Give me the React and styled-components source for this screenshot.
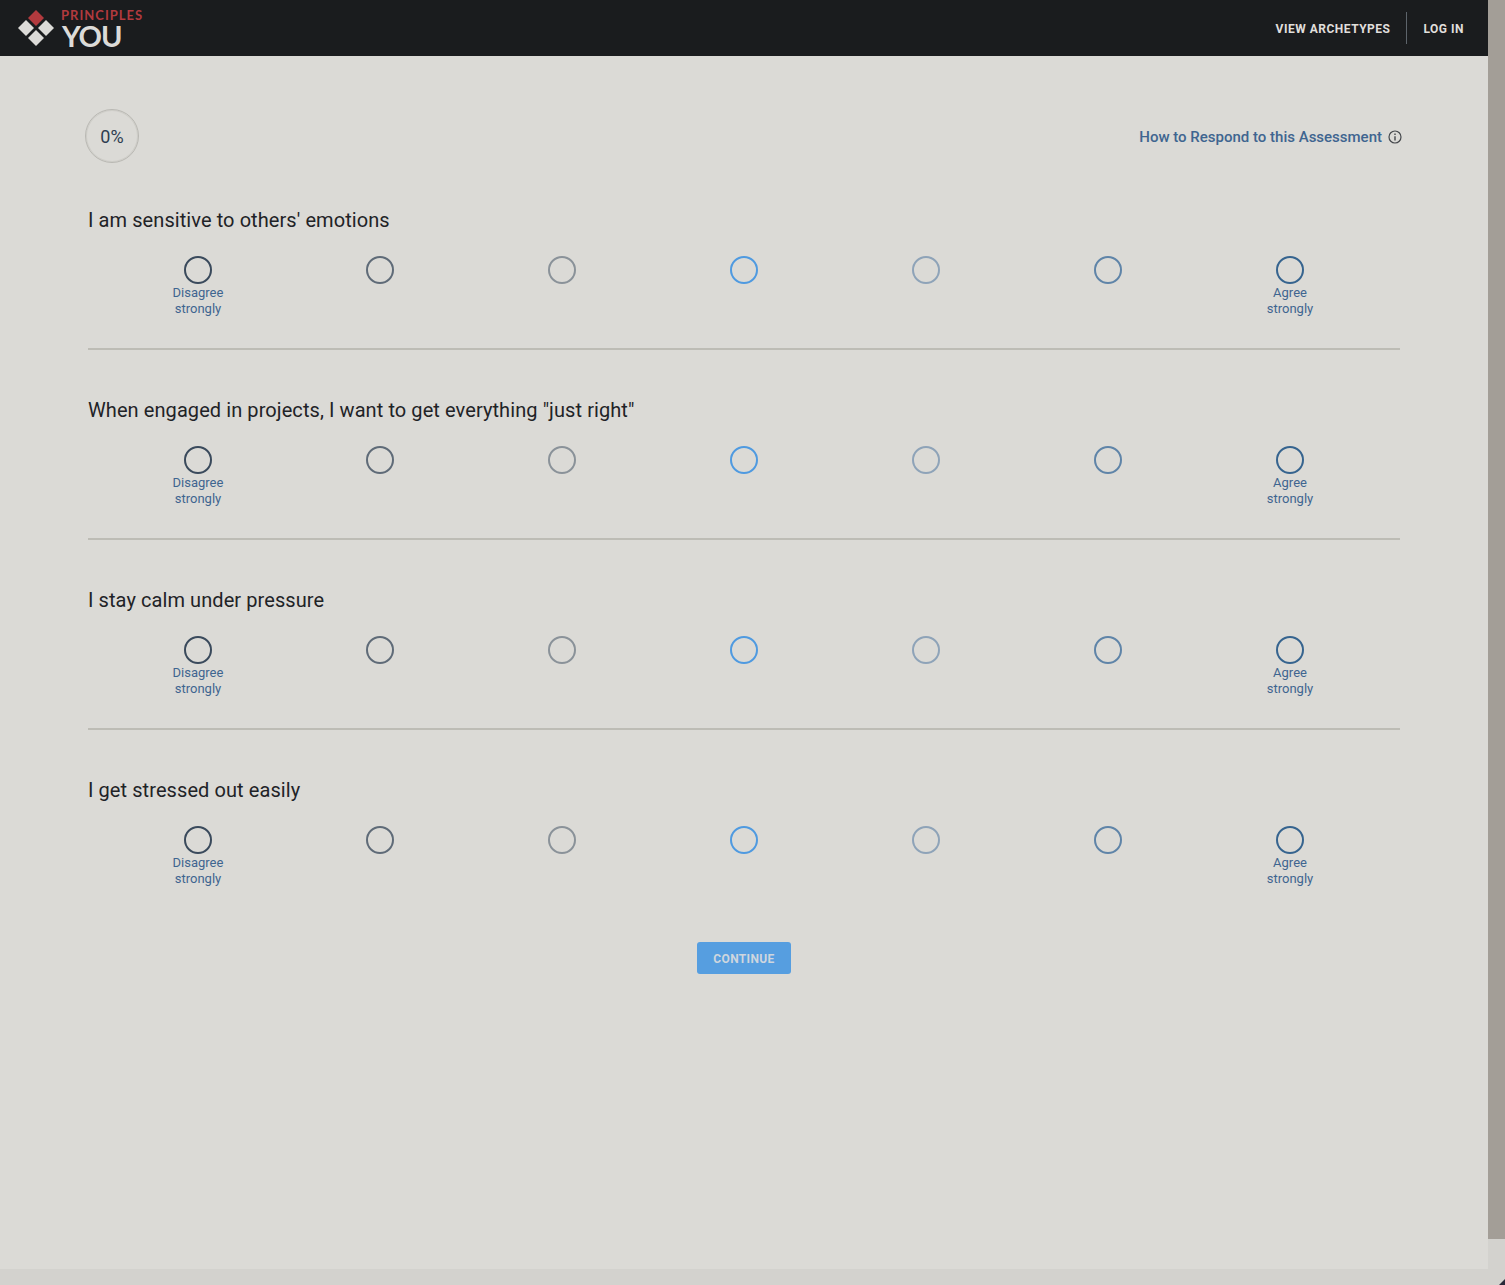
import React from 'react';
import styled, { createGlobalStyle } from 'styled-components';

const questions = [
  "I am sensitive to others' emotions",
  'When engaged in projects, I want to get everything "just right"',
  'I stay calm under pressure',
  'I get stressed out easily',
];

const scale = [
  { color: '#3a4a5c', label: ['Disagree', 'strongly'] },
  { color: '#5f6b78' },
  { color: '#8a9299' },
  { color: '#4f9ae0' },
  { color: '#8ea3b8' },
  { color: '#5f84a8' },
  { color: '#36648f', label: ['Agree', 'strongly'] },
];

const GlobalStyle = createGlobalStyle`
  html, body {
    margin: 0;
    height: 100%;
    overflow: hidden;
  }
  body {
    font-family: Roboto, "Liberation Sans", sans-serif;
    background: #d3d2ce;
  }
`;

const Page = styled.div`
  width: 1505px;
  height: 1285px;
  display: flex;
  position: relative;
`;
const Main = styled.div`
  width: 1488px;
  height: 1285px;
  display: flex;
  flex-direction: column;
`;
const Scrollbar = styled.div`
  width: 17px;
  height: 1285px;
  background: #d3d2ce;
`;
const Thumb = styled.div`
  height: 1239px;
  background: #a39e97;
`;
const Grip = styled.svg`
  position: absolute;
  right: 0;
  bottom: 0;
`;
const Header = styled.header`
  height: 56px;
  background: #1a1c1e;
  display: flex;
  align-items: center;
  justify-content: space-between;
  padding: 0 24px 0 18px;
`;
const Logo = styled.div`
  display: flex;
  align-items: center;
  gap: 7px;
`;
const LogoText = styled.div`
  display: flex;
  flex-direction: column;
  font-family: Lato, "Liberation Sans", sans-serif;
  height: 56px;
  padding-top: 8px;
  box-sizing: border-box;
`;
const LogoTop = styled.span`
  color: #b23a3e;
  font-size: 13px;
  font-weight: 700;
  line-height: 15px;
  letter-spacing: 1px;
`;
const LogoBottom = styled.span`
  color: #dcdbd8;
  font-size: 29px;
  font-weight: 700;
  line-height: 25px;
  letter-spacing: -1px;
  margin-left: 1px;
`;
const Nav = styled.nav`
  display: flex;
  align-items: center;
`;
const NavLink = styled.a`
  display: block;
  height: 32px;
  color: #e0dfdc;
  font-size: 12px;
  font-weight: 700;
  letter-spacing: 0.5px;
  line-height: 34px;
  text-transform: uppercase;
  padding-right: ${(p) => (p.$first ? '16px' : '0')};
  padding-left: ${(p) => (p.$first ? '0' : '16px')};
  border-right: ${(p) => (p.$first ? '1px solid #5d646b' : 'none')};
`;
const Content = styled.main`
  flex: 1;
  background: #dbdad6;
  padding: 53px 88px 0;
  display: flex;
  flex-direction: column;
`;
const TopRow = styled.div`
  display: flex;
  align-items: center;
  justify-content: space-between;
  margin-left: -3px;
  margin-right: -2px;
`;
const Progress = styled.div`
  width: 54px;
  height: 54px;
  box-sizing: border-box;
  border: 1px solid #b9b8b3;
  box-shadow: inset 0 0 0 1px #cfcec9;
  border-radius: 50%;
  display: flex;
  align-items: center;
  justify-content: center;
  color: #2f3d50;
  font-size: 18px;
`;
const HowTo = styled.a`
  display: flex;
  align-items: center;
  gap: 6px;
  margin-top: 2px;
  color: #3f6590;
  font-size: 15px;
  font-weight: 500;
`;
const Question = styled.section`
  height: ${(p) => (p.$first ? '187px' : '190px')};
  box-sizing: border-box;
  padding-top: ${(p) => (p.$first ? '45px' : '48px')};
  border-bottom: ${(p) => (p.$last ? 'none' : '2px solid #bdbcb5')};
`;
const Prompt = styled.h2`
  margin: 0;
  color: #1f2327;
  font-size: 20px;
  font-weight: 400;
  letter-spacing: 0.08px;
  line-height: 24px;
`;
const Scale = styled.div`
  display: grid;
  grid-template-columns: repeat(7, 182px);
  margin: 24px 0 0 19px;
`;
const Choice = styled.div`
  display: flex;
  flex-direction: column;
  align-items: center;
`;
const Circle = styled.span`
  width: 28px;
  height: 28px;
  box-sizing: border-box;
  border-radius: 50%;
  border: 2px solid ${(p) => p.$color};
`;
const Label = styled.span`
  margin-top: 1px;
  color: #3f6590;
  font-size: 13px;
  line-height: 16px;
  text-align: center;
`;
const Footer = styled.div`
  display: flex;
  justify-content: center;
  margin-top: 22px;
`;
const Continue = styled.button`
  width: 94px;
  height: 32px;
  padding: 1px 0 0;
  border: none;
  border-radius: 3px;
  background: #569ee0;
  color: #cfd6de;
  font-family: Roboto, "Liberation Sans", sans-serif;
  font-size: 12px;
  font-weight: 700;
  letter-spacing: 0.35px;
  text-transform: uppercase;
`;
const BottomBar = styled.div`
  height: 16px;
  background: #d3d2ce;
`;

function LogoMark() {
  return (
    <svg width="36" height="36" viewBox="0 0 36 36">
      <path d="M18 0l8 8-8 8-8-8z" fill="#b23a3e" />
      <path d="M8 10l8 8-8 8-8-8z" fill="#dcdbd8" />
      <path d="M28 10l8 8-8 8-8-8z" fill="#dcdbd8" />
      <path d="M18 20l8 8-8 8-8-8z" fill="#dcdbd8" />
    </svg>
  );
}

function InfoIcon() {
  return (
    <svg width="14" height="14" viewBox="0 0 14 14" fill="none" stroke="#45484c">
      <circle cx="7" cy="7" r="6" strokeWidth="1.2" />
      <path d="M7 6.200v4.300M7 3.500v1.500" strokeWidth="1.400" />
    </svg>
  );
}

export default function App() {
  return (
    <Page>
      <GlobalStyle />
      <Main>
        <Header>
          <Logo>
            <LogoMark />
            <LogoText>
              <LogoTop>PRINCIPLES</LogoTop>
              <LogoBottom>YOU</LogoBottom>
            </LogoText>
          </Logo>
          <Nav>
            <NavLink $first>View Archetypes</NavLink>
            <NavLink>Log In</NavLink>
          </Nav>
        </Header>
        <Content>
          <TopRow>
            <Progress>0%</Progress>
            <HowTo>
              How to Respond to this Assessment
              <InfoIcon />
            </HowTo>
          </TopRow>
          {questions.map((q, i) => (
            <Question key={q} $first={i === 0} $last={i === questions.length - 1}>
              <Prompt>{q}</Prompt>
              <Scale>
                {scale.map((s) => (
                  <Choice key={s.color}>
                    <Circle $color={s.color} />
                    {s.label && (
                      <Label>
                        {s.label[0]}
                        <br />
                        {s.label[1]}
                      </Label>
                    )}
                  </Choice>
                ))}
              </Scale>
            </Question>
          ))}
          <Footer>
            <Continue>Continue</Continue>
          </Footer>
        </Content>
        <BottomBar />
      </Main>
      <Scrollbar>
        <Thumb />
      </Scrollbar>
      <Grip width="6" height="6" viewBox="0 0 6 6">
        <path d="M6 0v6H0z" fill="#2a2a3a" />
      </Grip>
    </Page>
  );
}
